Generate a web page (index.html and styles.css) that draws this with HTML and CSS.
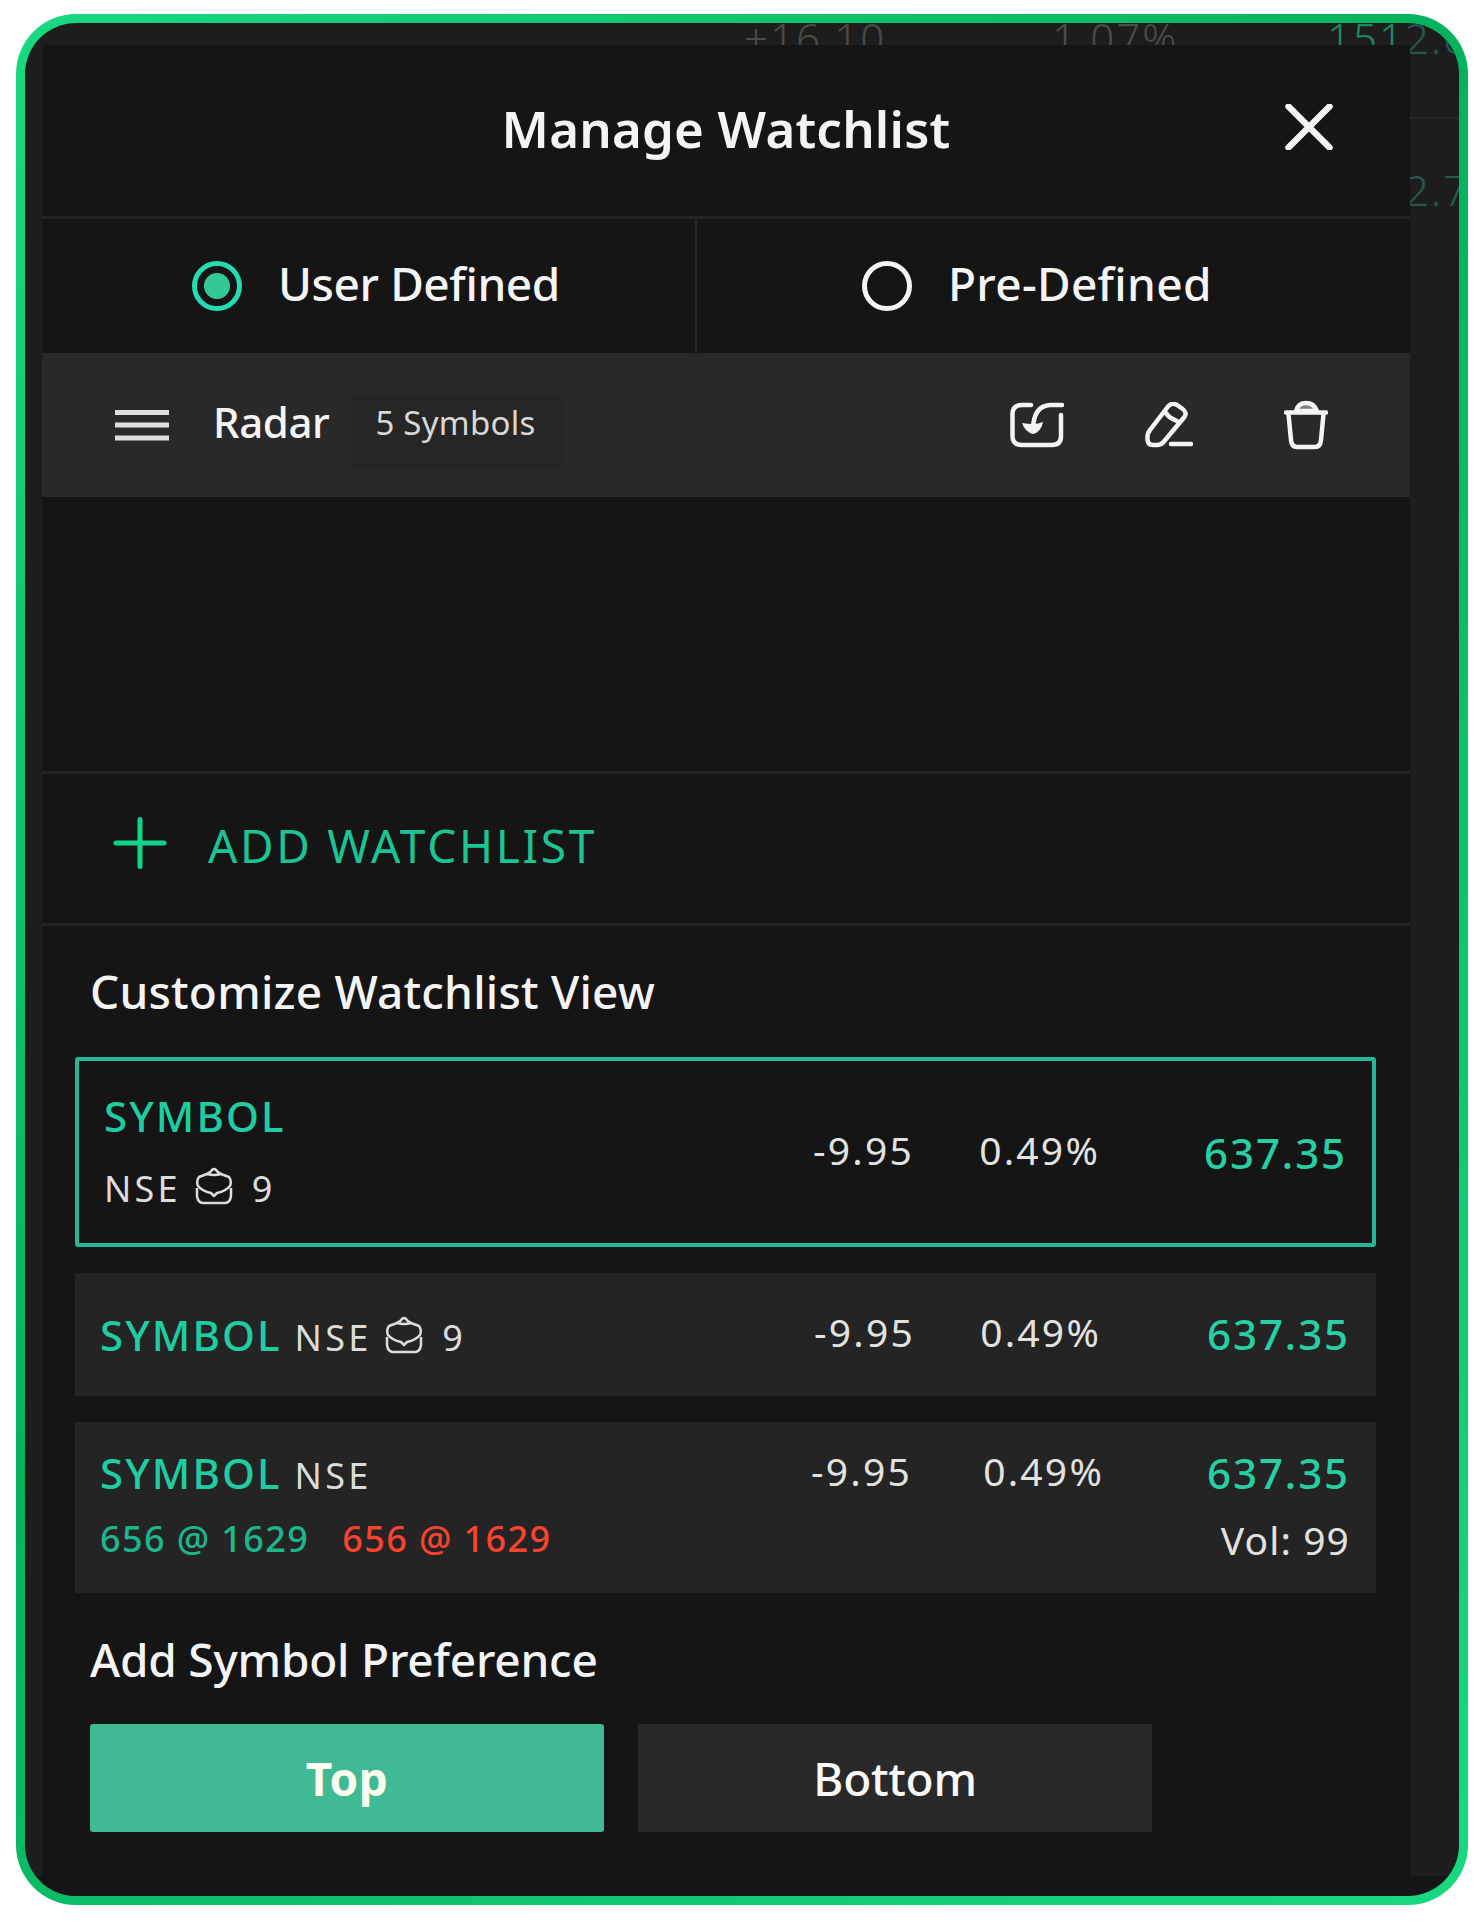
FILE: index.html
```html
<!DOCTYPE html>
<html lang="en">
<head>
    <meta charset="UTF-8">
    <meta name="viewport" content="width=device-width, initial-scale=1.0">
    <title>Manage Watchlist</title>
    <link rel="stylesheet" href="styles.css">
</head>
<body>
    <div class="frame">
        <div class="screen">
            <!-- Quotes list behind the dialog -->
            <div class="backdrop">
                <div class="backdrop-row">
                    <span class="backdrop-change">+16.10</span>
                    <span>1.07%</span>
                    <span class="backdrop-price">151<span class="dim">2.6</span></span>
                </div>
                <div class="backdrop-row">
                    <span class="backdrop-change"></span>
                    <span></span>
                    <span class="backdrop-price dim">1512.7</span>
                </div>
            </div>
            <div class="panel">
                <div class="header">
                    <h1>Manage Watchlist</h1>
                    <svg class="close" width="48" height="46" viewBox="0 0 48 46">
                        <path d="M3.5 2.5L44.5 43.5M44.5 2.5L3.5 43.5"/>
                    </svg>
                </div>
                <div class="tabs">
                    <div class="tab tab-user">
                        <span class="radio radio-on"></span>
                        <span class="tab-label">User Defined</span>
                    </div>
                    <div class="tab tab-pre">
                        <span class="radio"></span>
                        <span class="tab-label tab-label-pre">Pre-Defined</span>
                    </div>
                </div>
                <div class="list">
                    <div class="list-row">
                        <svg class="handle" width="54" height="32" viewBox="0 0 54 32">
                            <path d="M0 3.5H54M0 16H54M0 29H54"/>
                        </svg>
                        <span class="list-name">Radar</span>
                        <span class="badge">5 Symbols</span>
                        <div class="actions">
                            <svg class="icon" width="54" height="46" viewBox="0 0 54 46">
                                <path d="M21 3H12Q2.500 3 2.500 12V34Q2.500 43 12 43H42Q51 43 51 34V13"/>
                                <path d="M52 3H40Q24 4 23 26"/>
                                <path class="solid" d="M12 21Q18 22 23 22Q28 22 33 20Q31 30 23 32Q15 30 12 21Z"/>
                            </svg>
                            <svg class="icon icon-edit" width="48" height="46" viewBox="0 0 48 46">
                                <path d="M23 4.500Q27 0 32 3L37 6.500Q43 10.500 39 15.500L18.500 40Q16 43 12 43H8Q3 43 2.500 38V34Q2.500 31 5 28Z"/>
                                <path d="M21 11Q24 16 32 19"/>
                                <path d="M26 42H46"/>
                            </svg>
                            <svg class="icon icon-trash" width="44" height="50" viewBox="0 0 44 50">
                                <path d="M2 12.500H42"/>
                                <path class="lid" d="M12 11Q14 3 22 3Q30 3 33 11Z"/>
                                <path d="M4.500 14L7 40Q7.500 47 13 47H31Q36.500 47 37 40L39.500 14"/>
                            </svg>
                        </div>
                    </div>
                </div>
                <div class="add">
                    <svg class="plus" width="54" height="52" viewBox="0 0 54 52">
                        <path d="M27 2.500V49.500M3 26H51"/>
                    </svg>
                    <span>ADD WATCHLIST</span>
                </div>
                <h2 class="heading-view">Customize Watchlist View</h2>
                <div class="cards">
                    <div class="card card-selected">
                        <div class="stack">
                            <div class="symbol">SYMBOL</div>
                            <div class="meta">
                                <span class="exchange">NSE</span>
                                <svg class="holding" width="38" height="38" viewBox="0 0 38 38">
                                    <path d="M12 7Q15 6 17 3Q19 1 21 3Q23 6 26 7"/>
                                    <path d="M12 7Q19 9 26 7L34 10Q37 14 35 19Q31 24 22 26L19 29L16 26Q7 24 3 19Q1 14 4 10Z"/>
                                    <path d="M2 21V29Q3 36 8 36H30Q35 36 36 29V21"/>
                                </svg>
                                <span>9</span>
                            </div>
                        </div>
                        <span class="change">-9.95</span>
                        <span class="change">0.49%</span>
                        <span class="price">637.35</span>
                    </div>
                    <div class="card card-compact">
                        <div class="line">
                            <span class="symbol">SYMBOL</span>
                            <span class="meta">
                                <span class="exchange">NSE</span>
                                <svg class="holding" width="38" height="38" viewBox="0 0 38 38">
                                    <path d="M12 7Q15 6 17 3Q19 1 21 3Q23 6 26 7"/>
                                    <path d="M12 7Q19 9 26 7L34 10Q37 14 35 19Q31 24 22 26L19 29L16 26Q7 24 3 19Q1 14 4 10Z"/>
                                    <path d="M2 21V29Q3 36 8 36H30Q35 36 36 29V21"/>
                                </svg>
                                <span>9</span>
                            </span>
                        </div>
                        <span class="change">-9.95</span>
                        <span class="change">0.49%</span>
                        <span class="price">637.35</span>
                    </div>
                    <div class="card card-depth">
                        <div class="line">
                            <span class="symbol">SYMBOL</span>
                            <span class="meta"><span class="exchange">NSE</span></span>
                        </div>
                        <span class="change">-9.95</span>
                        <span class="change">0.49%</span>
                        <span class="price">637.35</span>
                        <div class="depth">
                            <span class="bid">656 @ 1629</span>
                            <span class="ask">656 @ 1629</span>
                        </div>
                        <span class="volume">Vol: 99</span>
                    </div>
                </div>
                <h2>Add Symbol Preference</h2>
                <div class="buttons">
                    <button class="btn btn-active">Top</button>
                    <button class="btn">Bottom</button>
                </div>
            </div>
        </div>
    </div>
</body>
</html>
```
FILE: styles.css
```css
* {
    box-sizing: border-box;
}
body {
    margin: 0;
    background-color: #fff;
    color: #f4f4f4;
    font-family: 'Noto Sans', 'Open Sans', sans-serif;
    font-size: 46px;
    font-weight: 500;
    white-space: nowrap;
}
svg {
    display: block;
    flex: none;
    fill: none;
    stroke: #f4f4f4;
}
h1, h2 {
    margin: 0;
    font-weight: 500;
}
.frame {
    width: 1452px;
    height: 1891px;
    margin: 14px 0 0 16px;
    padding: 9px;
    border-radius: 60px;
    background: linear-gradient(135deg, #19d980 0%, #06b15c 44%, #19d980 100%);
}
.screen {
    position: relative;
    height: 100%;
    padding: 22px 49px 0 17px;
    border-radius: 51px;
    background: linear-gradient(#1d1d1d 1853px, #151516 1853px);
    overflow: hidden;
}
.backdrop {
    position: absolute;
    top: -60px;
    left: 17px;
    right: 0;
    color: #4d4a46;
    font-size: 42px;
    font-weight: 300;
    letter-spacing: 2px;
}
.backdrop-row {
    display: grid;
    grid-template-columns: 308px 275px 132px;
    justify-content: end;
    align-items: center;
    height: 150px;
}
.backdrop-row:first-child {
    height: 156px;
    padding-bottom: 5px;
    border-bottom: 2px solid #272727;
}
.backdrop-price {
    color: #1a8a60;
}
.dim {
    color: #235a4f;
}
.backdrop-row:last-child {
    height: 140px;
}
.panel {
    position: relative;
    height: 100%;
    background-color: #151516;
}
.header {
    display: grid;
    grid-template-columns: 1fr auto 1fr;
    align-items: center;
    height: 174px;
    padding-bottom: 5px;
    border-bottom: 3px solid #232323;
}
.header h1 {
    grid-column: 2;
    font-size: 51px;
    font-weight: 600;
    letter-spacing: 0.2px;
}
.close {
    justify-self: end;
    margin: 0 77px 2px 0;
    stroke-width: 6.500;
    stroke-linecap: round;
}
.tabs {
    display: flex;
    height: 134px;
}
.tab {
    display: flex;
    align-items: center;
    gap: 36px;
}
.tab-user {
    width: 655px;
    padding-left: 150px;
    border-right: 2px solid #2a2a2b;
}
.tab-pre {
    padding-left: 165px;
}
.tab-label {
    padding-bottom: 7px;
    letter-spacing: -0.4px;
}
.tab-label-pre {
    letter-spacing: 0.3px;
}
.radio {
    width: 50px;
    height: 50px;
    border: 5px solid #f4f4f4;
    border-radius: 50%;
}
.radio-on {
    border-color: #25dbb0;
    background: radial-gradient(circle, #35c897 12.5px, transparent 13.5px);
}
.list {
    height: 418px;
}
.list-row {
    display: flex;
    align-items: center;
    height: 144px;
    padding-left: 73px;
    background-color: #292929;
}
.handle {
    stroke: #dededc;
    stroke-width: 5;
}
.list-name {
    margin-left: 44px;
    padding-bottom: 7px;
    font-size: 42px;
    letter-spacing: -0.4px;
}
.badge {
    height: 76px;
    margin: 14px 0 0 22px;
    padding: 0 26px 0 24px;
    background-color: #262626;
    color: #d8d8d6;
    font-size: 33px;
    font-weight: 400;
    line-height: 57px;
    letter-spacing: 0.25px;
}
.actions {
    display: flex;
    align-items: center;
    margin-left: auto;
    padding-right: 82px;
}
.icon {
    stroke-width: 4.500;
    stroke-linecap: round;
    stroke-linejoin: round;
}
.icon .solid {
    fill: #f4f4f4;
    stroke: none;
}
.icon .lid {
    fill: #7d7d7d;
}
.icon-edit {
    margin-left: 81px;
}
.icon-trash {
    margin-left: 91px;
}
.add {
    display: flex;
    align-items: center;
    gap: 41px;
    height: 155px;
    padding: 0 0 8px 71px;
    border-top: 3px solid #222;
    border-bottom: 3px solid #222;
    color: #1bc593;
    font-weight: 400;
    letter-spacing: 2.7px;
}
.plus {
    margin-top: -3px;
    stroke: #10d589;
    stroke-width: 5;
    stroke-linecap: round;
}
h2 {
    height: 131px;
    padding-left: 48px;
    font-size: 46px;
    line-height: 132px;
    letter-spacing: -0.2px;
}
.heading-view {
    line-height: 130px;
    letter-spacing: 0.2px;
}
.cards {
    display: flex;
    flex-direction: column;
    gap: 26px;
    padding: 0 34px 0 33px;
}
.card {
    display: grid;
    grid-template-columns: 1fr 140px 186px 249px;
    align-items: center;
    align-content: center;
    padding: 0 26px 0 25px;
    background-color: #242424;
}
.card-selected {
    height: 190px;
    padding-right: 25px;
    border: 4px solid #25b795;
    border-radius: 3px;
    background-color: #151516;
}
.card-selected .change {
    position: relative;
    left: 2px;
}
.card-compact {
    height: 123px;
    padding-bottom: 2px;
}
.card-depth {
    grid-template-columns: 1fr 140px 192px 246px;
    grid-auto-rows: 66px;
    height: 171px;
    padding-bottom: 4px;
}
.stack {
    line-height: 73px;
}
.line {
    display: flex;
    align-items: baseline;
    gap: 13px;
}
.card-compact .line {
    padding-top: 2px;
}
.symbol {
    color: #1fcda0;
    font-size: 42px;
    font-weight: 500;
    letter-spacing: 2.1px;
}
.meta {
    display: flex;
    align-items: center;
    color: #dcdcda;
    font-size: 36px;
    font-weight: 400;
}
.exchange {
    letter-spacing: 3.2px;
}
.holding {
    margin: 0 19px 6px 14px;
    stroke: #dcdcda;
    stroke-width: 2.500;
    stroke-linejoin: round;
}
.change, .price, .volume {
    text-align: right;
    font-weight: 400;
}
.change {
    padding-bottom: 5px;
    color: #e2e2e0;
    font-size: 39px;
    letter-spacing: 2.2px;
}
.price {
    color: #26d0a2;
    font-size: 42px;
    font-weight: 500;
    letter-spacing: 1.9px;
}
.depth {
    display: flex;
    gap: 33px;
    font-size: 36px;
    letter-spacing: 1.4px;
}
.bid {
    color: #1db68c;
}
.ask {
    color: #f8432f;
}
.volume {
    grid-column: 4;
    padding-top: 2px;
    color: #e2e2e0;
    font-size: 39px;
    letter-spacing: 1.1px;
}
.buttons {
    display: flex;
    gap: 34px;
    padding-left: 48px;
}
.btn {
    width: 514px;
    height: 108px;
    padding: 0 0 1px;
    border: none;
    background-color: #292929;
    color: #fafafa;
    font-family: inherit;
    font-size: 46px;
    font-weight: 500;
    letter-spacing: -0.3px;
}
.btn-active {
    border-radius: 3px;
    background-color: #40ba95;
    color: #fffff0;
    font-weight: 700;
    letter-spacing: 0.5px;
}
```
